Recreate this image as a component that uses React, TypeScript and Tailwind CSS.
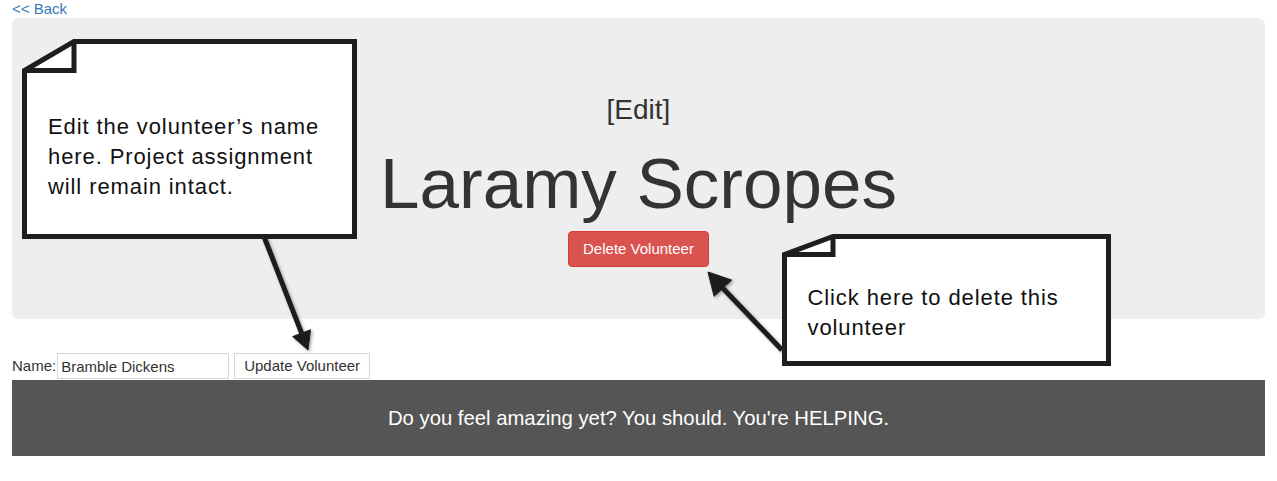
import React from "react";

function Callout({
  left,
  top,
  w,
  h,
  fx,
  fy,
  textLeft,
  textTop,
  children,
}: {
  left: number;
  top: number;
  w: number;
  h: number;
  fx: number;
  fy: number;
  textLeft: number;
  textTop: number;
  children: React.ReactNode;
}) {
  const r = w - 2.5;
  const b = h - 2.5;
  return (
    <div className="absolute" style={{ left, top, width: w, height: h }}>
      <svg width={w} height={h} className="absolute left-0 top-0">
        <path
          d={`M${fx} 2.5 L${r} 2.5 L${r} ${b} L2.5 ${b} L2.5 ${fy} Z`}
          fill="#ffffff"
          stroke="#1e1e1e"
          strokeWidth={5}
          strokeLinejoin="miter"
        />
        <path
          d={`M${fx} 2.5 L${fx} ${fy} L2.5 ${fy}`}
          fill="none"
          stroke="#1e1e1e"
          strokeWidth={5}
          strokeLinejoin="miter"
        />
      </svg>
      <div
        className="absolute text-[22px] leading-[30px] tracking-[0.9px] text-[#111] whitespace-nowrap"
        style={{ left: textLeft, top: textTop }}
      >
        {children}
      </div>
    </div>
  );
}

export default function App() {
  return (
    <div
      className="relative w-full px-3 text-[#333]"
      style={{ fontFamily: '"Liberation Sans", Arial, sans-serif' }}
    >
      <a href="#" className="block h-[18px] text-[15px] leading-[17px] text-[#337ab7]">
        &lt;&lt; Back
      </a>

      <div className="flex flex-col items-center rounded-md bg-[#eeeeee] pt-[76px] pb-[52px]">
        <div className="text-[28px] leading-[32px]">[Edit]</div>
        <h1 className="mt-[19px] text-[71px] leading-[77px] font-normal">Laramy Scropes</h1>
        <button className="mt-[9px] h-[36px] rounded border border-[#d43f3a] bg-[#d9534f] px-[14px] text-[15px] text-white">
          Delete Volunteer
        </button>
      </div>

      <div className="mt-[34px] flex h-[26px] items-center text-[15px]">
        <span>Name:</span>
        <input
          className="ml-px h-[26px] w-[172px] border border-[#d6d6d6] bg-white pl-[3px] text-[15px] text-[#333] outline-none"
          defaultValue="Bramble Dickens"
        />
        <button className="ml-[5px] h-[26px] border border-[#d6d6d6] bg-white px-[9px] text-[15px] text-[#333]">
          Update Volunteer
        </button>
      </div>

      <div className="mt-px flex h-[76px] items-center justify-center bg-[#555555] text-[20.3px] text-white">
        Do you feel amazing yet? You should. You're HELPING.
      </div>

      <svg
        width={1277}
        height={481}
        className="pointer-events-none absolute left-0 top-0"
      >
        <defs>
          <filter id="ash" x="-20%" y="-20%" width="140%" height="140%">
            <feDropShadow dx="1.5" dy="1.5" stdDeviation="1.5" floodColor="#000" floodOpacity="0.35" />
          </filter>
        </defs>
        <g filter="url(#ash)" fill="#1e1e1e" stroke="#1e1e1e">
          <line x1={263} y1={234} x2={301.6} y2={333.2} strokeWidth={5} />
          <polygon points="308,350 292.7,336.6 310.5,329.8" strokeWidth={1} />
          <line x1={782} y1={350} x2={722.9} y2={288.2} strokeWidth={5} />
          <polygon points="708,272 714.1,296.3 731.7,280.1" strokeWidth={1} />
        </g>
      </svg>

      <Callout left={22} top={39} w={335} h={200} fx={52} fy={31.5} textLeft={26} textTop={73}>
        Edit the volunteer’s name
        <br />
        here. Project assignment
        <br />
        will remain intact.
      </Callout>

      <Callout left={781.5} top={234} w={329} h={132} fx={51} fy={20.5} textLeft={26} textTop={49}>
        Click here to delete this
        <br />
        volunteer
      </Callout>
    </div>
  );
}
